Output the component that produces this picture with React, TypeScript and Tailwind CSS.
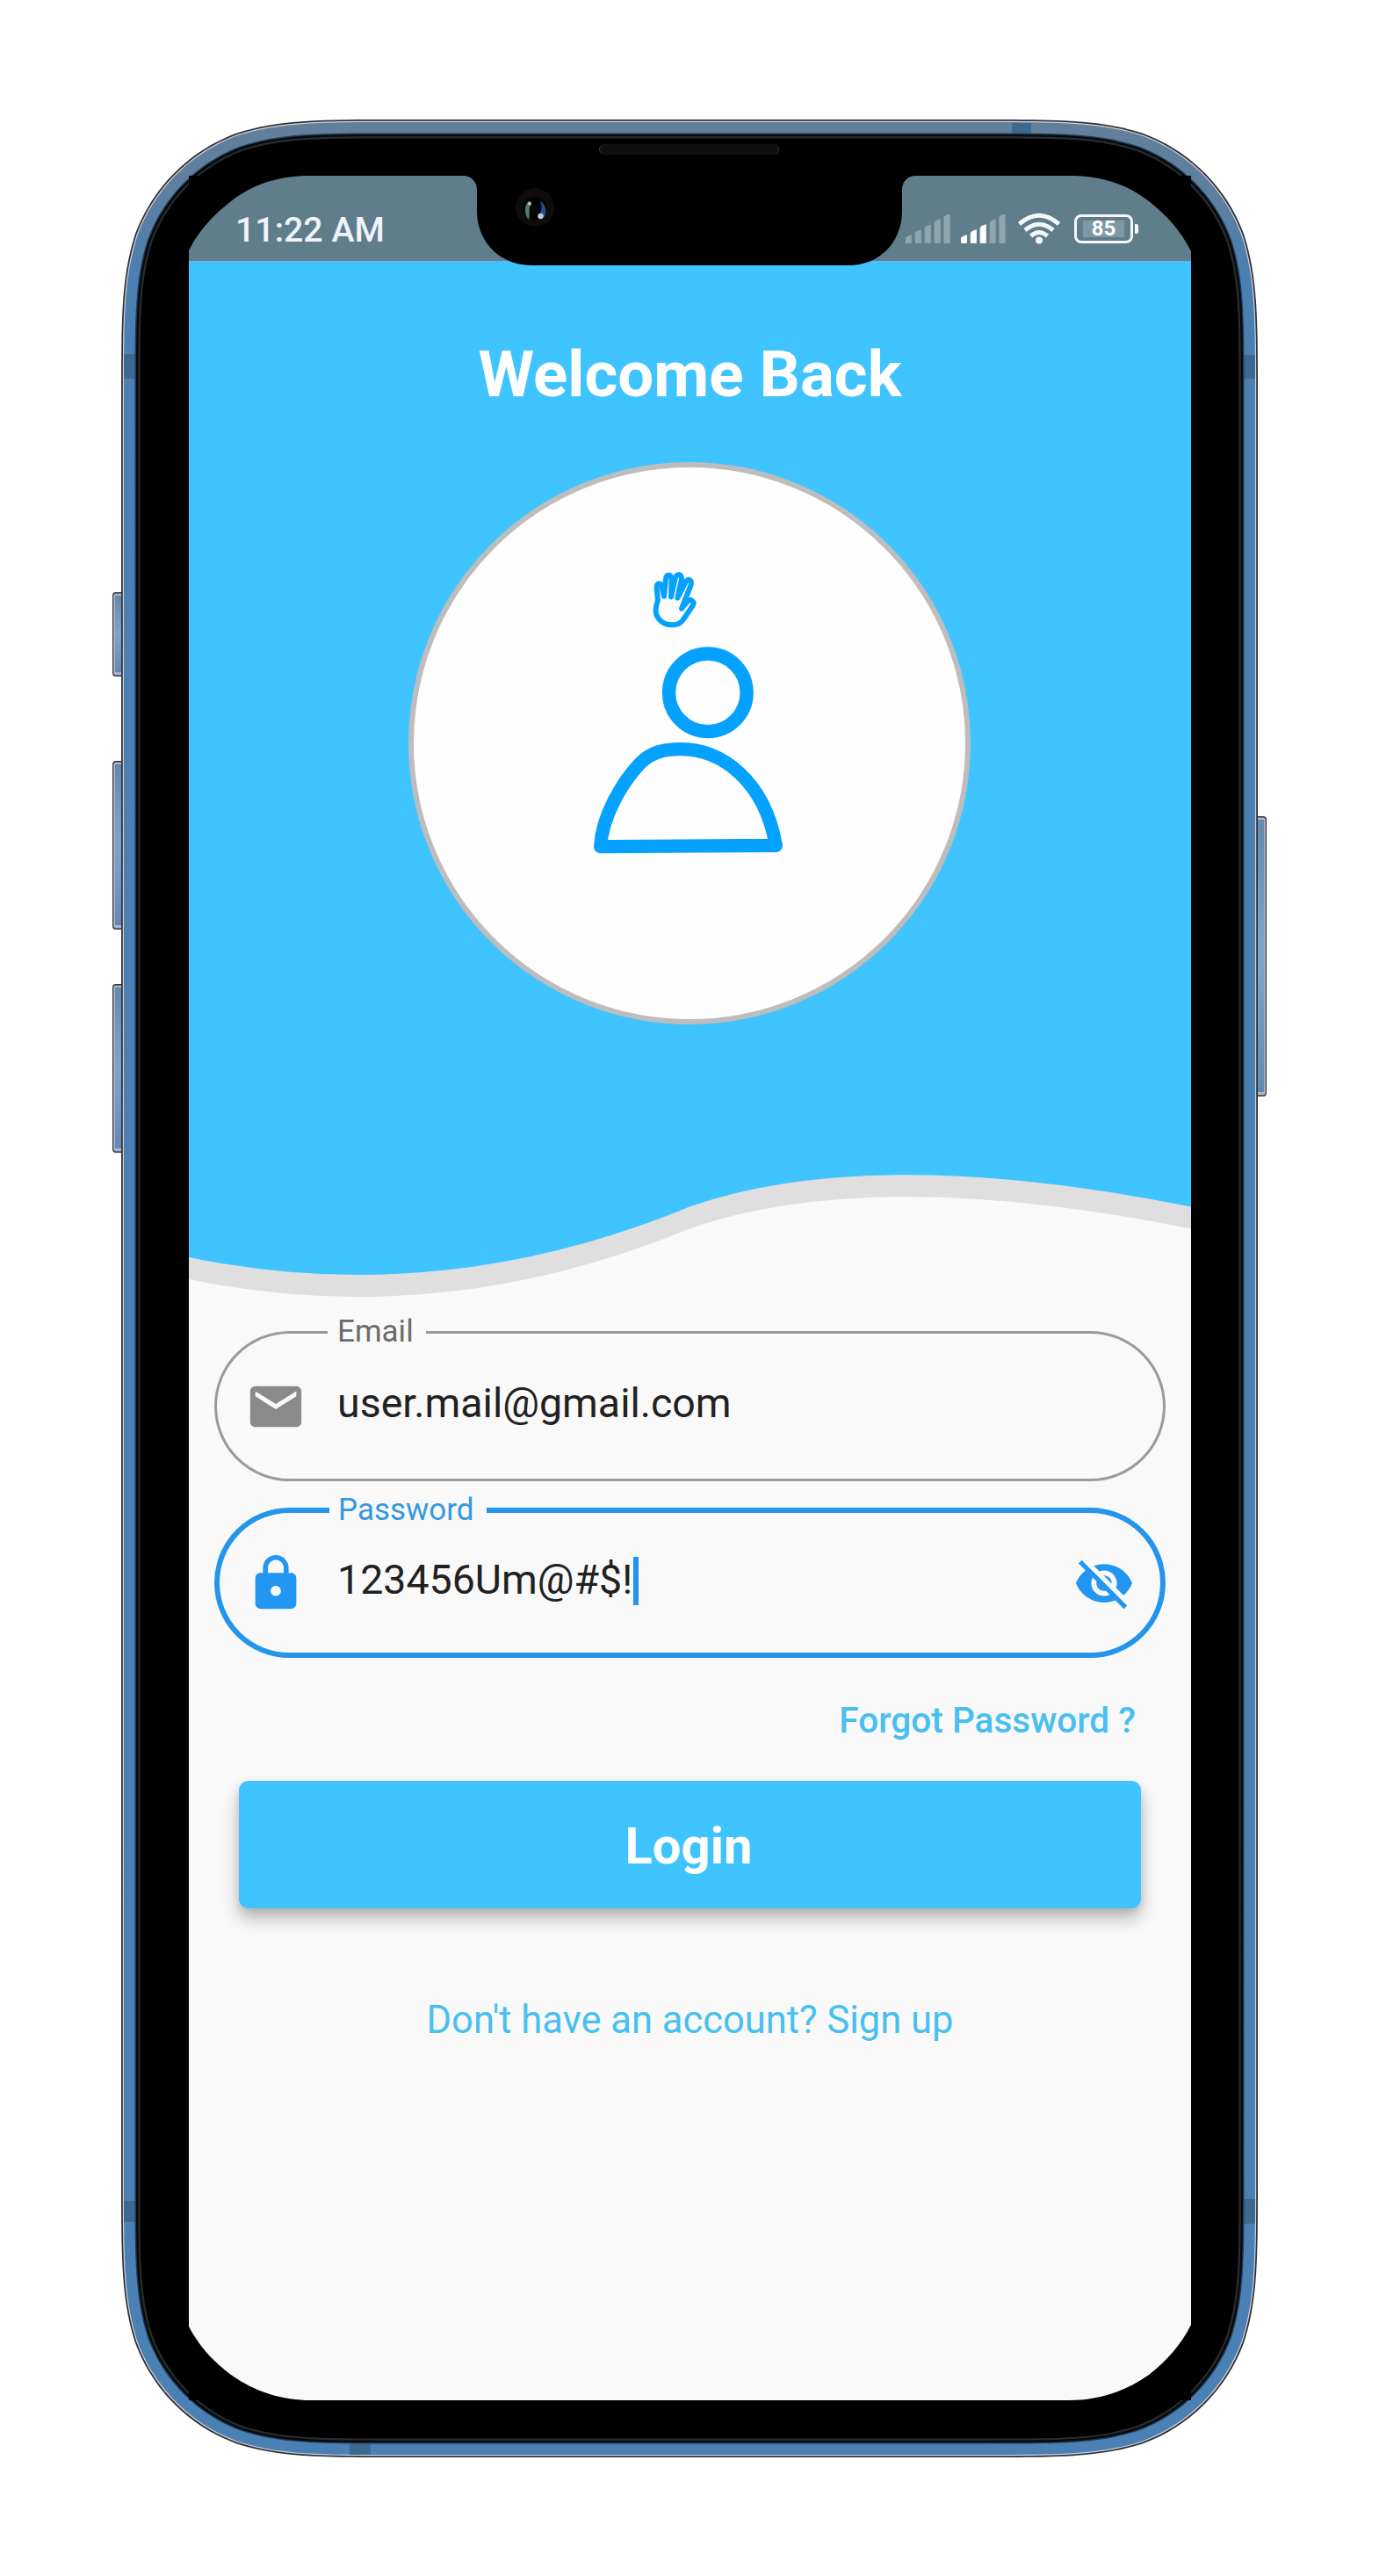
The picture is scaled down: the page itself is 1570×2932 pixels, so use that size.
import React from "react";
import { MdEmail, MdLock, MdVisibilityOff } from "react-icons/md";

// Continuous ("squircle") corner outline of the handset, inset by `i` pixels.
function shell(i: number) {
  const x0 = 138 + i;
  const y0 = 136 + i;
  const x1 = 1432 - i;
  const y1 = 2797 - i;
  const r = 208 - i;
  const a = 1.528665 * r;
  const b = 1.08849 * r;
  const c = 0.868407 * r;
  const d = 0.631494 * r;
  const e = 0.0749114 * r;
  const f = 0.372824 * r;
  const g = 0.169060 * r;
  return [
    `M${x0 + a} ${y0}H${x1 - a}`,
    `C${x1 - b} ${y0} ${x1 - c} ${y0} ${x1 - d} ${y0 + e}`,
    `C${x1 - f} ${y0 + g} ${x1 - g} ${y0 + f} ${x1 - e} ${y0 + d}`,
    `C${x1} ${y0 + c} ${x1} ${y0 + b} ${x1} ${y0 + a}`,
    `V${y1 - a}`,
    `C${x1} ${y1 - b} ${x1} ${y1 - c} ${x1 - e} ${y1 - d}`,
    `C${x1 - g} ${y1 - f} ${x1 - f} ${y1 - g} ${x1 - d} ${y1 - e}`,
    `C${x1 - c} ${y1} ${x1 - b} ${y1} ${x1 - a} ${y1}`,
    `H${x0 + a}`,
    `C${x0 + b} ${y1} ${x0 + c} ${y1} ${x0 + d} ${y1 - e}`,
    `C${x0 + f} ${y1 - g} ${x0 + g} ${y1 - f} ${x0 + e} ${y1 - d}`,
    `C${x0} ${y1 - c} ${x0} ${y1 - b} ${x0} ${y1 - a}`,
    `V${y0 + a}`,
    `C${x0} ${y0 + b} ${x0} ${y0 + c} ${x0 + e} ${y0 + d}`,
    `C${x0 + g} ${y0 + f} ${x0 + f} ${y0 + g} ${x0 + d} ${y0 + e}`,
    `C${x0 + c} ${y0} ${x0 + b} ${y0} ${x0 + a} ${y0}Z`,
  ].join("");
}

function SideKey({ x, y, h }: { x: number; y: number; h: number }) {
  return (
    <g>
      <rect x={x} y={y} width="20" height={h} rx="4" fill="#34343c" />
      <rect x={x + 1.2} y={y + 1.5} width="17.6" height={h - 3} rx="3" fill="#a9b4cc" />
      <rect x={x + 3} y={y + 4} width="14" height={h - 9} rx="1" fill="url(#key)" />
    </g>
  );
}

function Handset() {
  return (
    <svg className="absolute inset-0" width="1570" height="2932" viewBox="0 0 1570 2932">
      <defs>
        <linearGradient id="band" gradientUnits="userSpaceOnUse" x1="0" y1="136" x2="0" y2="2797">
          <stop offset="0" stopColor="#62809c" />
          <stop offset="0.03" stopColor="#5f7f9f" />
          <stop offset="0.065" stopColor="#4b7fb0" />
          <stop offset="1" stopColor="#4a80b3" />
        </linearGradient>
        <linearGradient id="key" x1="0" y1="0" x2="0" y2="1">
          <stop offset="0" stopColor="#6488b0" />
          <stop offset="0.5" stopColor="#7fa5cf" />
          <stop offset="1" stopColor="#6488b4" />
        </linearGradient>
      </defs>
      <SideKey x={128} y={674} h={96} />
      <SideKey x={128} y={866} h={192} />
      <SideKey x={128} y={1120} h={192} />
      <SideKey x={1422} y={929} h={319} />
      <path d={shell(0)} fill="#333236" />
      <path d={shell(1.8)} fill="#d3d3dd" />
      <path d={shell(3)} fill="url(#band)" />
      <g fill="#3d6890">
        <rect x="141" y="403" width="15" height="28" />
        <rect x="1414" y="404" width="15" height="27" />
        <rect x="141" y="2505" width="15" height="24" />
        <rect x="1414" y="2503" width="15" height="28" />
        <rect x="1152" y="140" width="22" height="15" />
        <rect x="398" y="2780" width="24" height="14" />
      </g>
      <path d={shell(15.5)} fill="#1d3852" />
      <path d={shell(17)} fill="#06090c" />
      <path d={shell(19.3)} fill="#2b2c2e" />
      <path d={shell(21.5)} fill="#000" />
    </svg>
  );
}

function Bezel() {
  return (
    <svg
      className="pointer-events-none absolute inset-0"
      width="1141"
      height="2532"
      viewBox="215 200 1141 2532"
    >
      <path d="M213 198H354V200C322 200 291 207 263 229C243 245 227 261 215 285H213Z" />
      <path d="M1358 198H1217V200C1249 200 1280 207 1308 229C1328 245 1344 262 1356 286H1358Z" />
      <path d="M213 2734H354V2732C322 2732 291 2723 263 2703C243 2688 227 2671 215 2648H213Z" />
      <path d="M1358 2734H1217V2732C1249 2732 1280 2723 1308 2703C1328 2687 1344 2670 1356 2646H1358Z" />
      <path d="M527 198V200C537 200 543 207 543 216V240C543 276 570 302 605 302H966C1001 302 1027 276 1027 240V216C1027 207 1033 200 1043 200V198Z" />
      <circle cx="609" cy="236" r="22" fill="#0d0d0e" />
      <circle cx="609" cy="237" r="13.5" fill="#020203" />
      <path d="M602 229C597 233 596 244 602 250C604 244 601 236 605 230Z" fill="#4f7d68" />
      <path d="M615 229C622 232 623 243 619 248L615 243C617 238 617 233 615 229Z" fill="#1d5290" />
      <circle cx="609" cy="239" r="5" fill="#050505" />
      <circle cx="603" cy="232" r="2" fill="#b4c4bc" />
      <circle cx="615.500" cy="246" r="3.2" fill="#c9c3e2" />
    </svg>
  );
}

const BARS = [0, 1, 2, 3, 4];

function Signal({ level }: { level: number }) {
  return (
    <svg width="51" height="33" viewBox="0 0 51 33">
      {BARS.map((n) => (
        <path
          key={n}
          d={`M${n * 10.9 + 0.3} 32.500v-${5 + n * 6}q0-2 6.300-3.800v${8.8 + n * 6}z`}
          fill={n < level ? "#fff" : "#8fa6b1"}
          stroke={n < level ? "#fff" : "#8fa6b1"}
          strokeWidth="0.8"
          strokeLinejoin="round"
        />
      ))}
    </svg>
  );
}

function Wifi() {
  return (
    <svg width="50" height="36" viewBox="0 0 50 36" fill="none" stroke="#f4f8fb" strokeWidth="5">
      <path d="M2.500 13Q25-6.500 47.500 13" />
      <path d="M9 20Q25 6.500 41 20" />
      <path d="M15.500 26.500Q25 18.500 34.500 26.500" />
      <circle cx="25" cy="31.500" r="4" fill="#f4f8fb" stroke="none" />
    </svg>
  );
}

function StatusBar() {
  return (
    <div className="relative flex h-[97px] shrink-0 items-start justify-between border-b-[5px] border-[#6b7c8a] bg-[#607d8b] pr-[60px] pl-[53px]">
      <span className="mt-[38px] text-[39.3px] leading-[48px] font-medium text-[#eef4fa]">11:22 AM</span>
      <div className="mt-[42px] flex h-[36px] items-center">
        <Signal level={0} />
        <div className="ml-[12px] flex">
          <Signal level={3} />
        </div>
        <div className="ml-[13px] flex">
          <Wifi />
        </div>
        <div className="ml-[15px] flex h-[33px] w-[67px] items-center justify-center rounded-[8px] border-[3px] border-[#f4f8fb] p-[4px]">
          <div className="flex h-full w-[47px] items-center justify-center bg-[#7f98a5] text-[24px] leading-none font-bold text-white">
            85
          </div>
        </div>
        <div className="ml-[2px] h-[11px] w-[4px] rounded-r-[2px] bg-[#f4f8fb]" />
      </div>
    </div>
  );
}

function Wave() {
  return (
    <svg
      className="absolute inset-0"
      width="1141"
      height="2532"
      viewBox="215 200 1141 2532"
    >
      <path d="M215 290V1456Q500 1515.500 785 1398.500Q993 1326 1356 1398.500V290Z" fill="#dfdfdf" />
      <path d="M215 290V1431Q500 1490.500 785 1373.500Q993 1301 1356 1373.500V290Z" fill="#3fc4ff" />
    </svg>
  );
}

function Avatar() {
  return (
    <div className="relative mt-[57px] mr-[2px] flex size-[640px] justify-center rounded-full border-[6px] border-[#bdbdbd] bg-[#fefefe]">
      <svg
        className="mt-[88px] ml-[-9px] h-[380px] w-[320px]"
        viewBox="0 0 960 1140"
        fill="none"
        stroke="#05a1ff"
        strokeLinejoin="round"
        strokeLinecap="round"
      >
        <path
          strokeWidth="18"
          d="M408 176L402 148C399 128 381 126 383 150L387 190C376 220 378 240 390 253C412 280 455 280 472 258L506 208C514 194 500 182 488 194L468 218L499 140C506 118 488 114 482 127L454 182L467 122C472 97 450 96 446 116L432 178L434 120C434 98 414 98 414 118L408 176Z"
        />
        <circle cx="557.500" cy="505" r="133" strokeWidth="46" />
        <path
          strokeWidth="46"
          d="M191 1031C196 930 262 815 325 748C362 709 405 698 465 698C600 698 750 800 790 1027Z"
        />
      </svg>
    </div>
  );
}

function EmailField() {
  return (
    <div className="relative mt-[349px] flex h-[171px] w-[1083px] items-center rounded-full border-[3px] border-[#9a9a9a] pl-[32px]">
      <span className="absolute top-[-22px] left-[126px] bg-[#f9f9f9] pr-[14px] pl-[11px] text-[35px] leading-[40px] text-[#6b6b6b]">
        Email
      </span>
      <MdEmail className="size-[70px] shrink-0 text-[#8a8a8a]" />
      <span className="mt-[-7px] ml-[35px] text-[46.5px] leading-[54px] text-[#212121]">
        user.mail@gmail.com
      </span>
    </div>
  );
}

function PasswordField() {
  return (
    <div className="relative mt-[30px] flex h-[171px] w-[1083px] items-center rounded-full border-[6px] border-[#2395ec] pr-[29px] pl-[29px]">
      <span className="absolute top-[-23px] left-[125px] bg-[#f9f9f9] pr-[14px] pl-[10px] text-[35px] leading-[40px] text-[#3498e2]">
        Password
      </span>
      <MdLock className="size-[70px] shrink-0 text-[#2196f3]" />
      <span className="mt-[-7px] ml-[35px] text-[46.5px] leading-[54px] text-[#212121]">
        123456Um@#$!
      </span>
      <span className="mt-[-5px] ml-px h-[55px] w-[6px] bg-[#2196f3]" />
      <MdVisibilityOff className="ml-auto size-[70px] text-[#2196f3]" />
    </div>
  );
}

export default function App() {
  return (
    <div className="relative flex h-[2932px] w-[1570px] flex-col bg-white pt-[200px] pl-[215px] font-['Roboto',sans-serif]">
      <Handset />
      <div className="absolute top-[164px] left-[682px] h-[12px] w-[205px] rounded-full border-x border-[#3a3a3a] bg-[#0f0f10]" />
      <main className="relative flex h-[2532px] w-[1141px] flex-col overflow-hidden bg-[#f9f9f9]">
        <Wave />
        <StatusBar />
        <div className="relative flex flex-col items-center">
          <h1 className="mt-[88px] text-[72.7px] leading-[84px] font-bold text-white">Welcome Back</h1>
          <Avatar />
          <EmailField />
          <PasswordField />
          <a className="mt-[47px] mr-[63px] self-end text-[40.6px] leading-[48px] font-medium text-[#48bff0]">
            Forgot Password ?
          </a>
          <button className="mt-[45px] h-[145px] w-[1027px] rounded-[11px] bg-[#3fc4ff] pt-[3px] pr-[3px] text-[58px] leading-[68px] font-bold text-white shadow-[0_12px_20px_rgba(0,0,0,0.26),0_3px_8px_rgba(0,0,0,0.1)]">
            Login
          </button>
          <a className="mt-[102px] text-[43.5px] leading-[52px] text-[#48bff0]">
            Don't have an account? Sign up
          </a>
        </div>
        <Bezel />
      </main>
    </div>
  );
}
